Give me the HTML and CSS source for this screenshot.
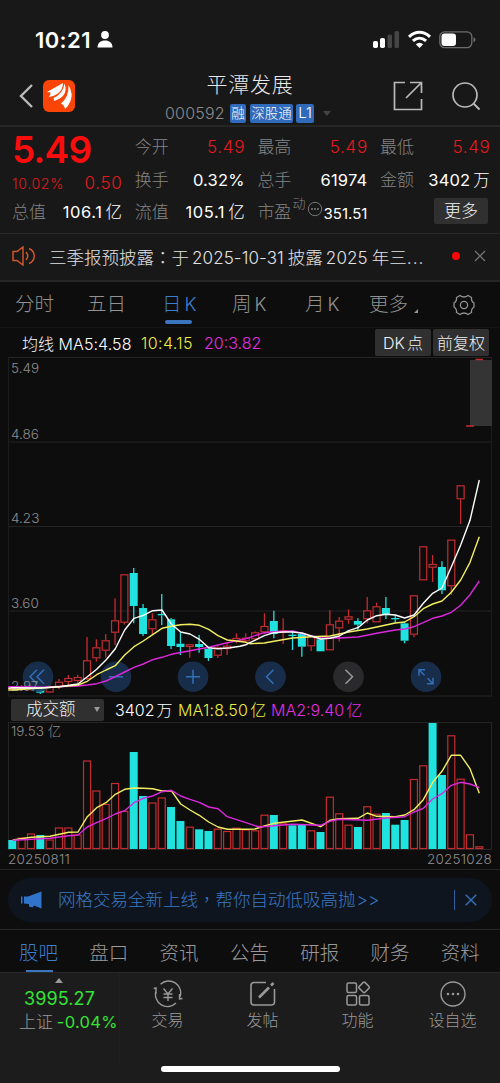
FILE: index.html
```
<!DOCTYPE html>
<html lang="zh-CN">
<head>
<meta charset="utf-8">
<title>平潭发展 000592</title>
<link rel="stylesheet" href="styles.css">
</head>
<body>
<header class="top">
  <div class="status">
    <div class="clock">10:21</div>
    <svg class="person" width="16" height="17" viewBox="0 0 16 17"><circle cx="8" cy="4" r="3.9" fill="#fff"/><path d="M0.5 16.5C0.5 11.8 3.6 9.4 8 9.4s7.500 2.400 7.500 7.100z" fill="#fff"/></svg>
    <svg class="signals" width="104" height="20" viewBox="0 0 104 20">
      <g fill="#fff"><rect x="0" y="11" width="5" height="7" rx="1.800"/><rect x="7" y="8" width="5" height="10" rx="1.800"/></g>
      <g fill="#454545"><rect x="14.500" y="4.500" width="4.500" height="13.500" rx="1.500"/><rect x="21.500" y="1" width="4.500" height="17" rx="1.500"/></g>
      <g fill="none" stroke="#fff" stroke-width="3"><path d="M36 6.800C42.500 0.800 50.500 0.800 57 6.800"/><path d="M39.900 10.900C44 7.200 49 7.200 53.100 10.900"/></g>
      <path d="M42.800 14.200q3.700-3 7.400 0l-3.700 3.700z" fill="#fff"/>
      <rect x="66.800" y="1.800" width="32" height="15.800" rx="4.800" fill="none" stroke="#6c6c6c" stroke-width="1.300"/>
      <rect x="68.500" y="3.500" width="14.500" height="12.400" rx="3" fill="#fff"/>
      <path d="M100.500 7v5.500q2-1 2-2.750t-2-2.750z" fill="#6c6c6c"/>
    </svg>
  </div>
  <div class="titlebar">
    <svg class="back" width="16" height="26" viewBox="0 0 16 26"><path d="M14 2L3 13L14 24" fill="none" stroke="#b9b9b9" stroke-width="2.400"/></svg>
    <svg class="logo" width="32" height="32" viewBox="0 0 32 32"><rect width="32" height="32" rx="6" fill="#fb4508"/><g fill="#fff"><path d="M4 12Q12 7.500 20 3Q20 9.500 15 13.500Q11 16.500 5.500 17Q8 14.500 7.500 12.500Q6 12 4 12z"/><path d="M21.500 3.500Q24.500 11 20 16Q16 20 11 21Q11 18.500 10.500 18Q20 14 21.500 3.500z"/><path d="M25.500 5Q30.500 14 27.500 21Q25.500 26 22 29Q21.500 25 18 23.500Q26 17 25.500 5z"/></g></svg>
    <div class="name">
      <h1>平潭发展</h1>
      <div class="code"><span class="num">000592</span><b class="tag t1">融</b><b class="tag t2">深股通</b><b class="tag t3">L1</b><i class="caret"></i></div>
    </div>
    <svg class="share" width="30" height="30" viewBox="0 0 30 30"><path d="M12 1.500H1.500v27h27V18M17 1.500h11.500V12M28 2L13 17" fill="none" stroke="#b9b9b9" stroke-width="1.700"/></svg>
    <svg class="search" width="30" height="30" viewBox="0 0 30 30"><circle cx="14" cy="14" r="12" fill="none" stroke="#b9b9b9" stroke-width="1.700"/><path d="M22.500 22.500l6 6" stroke="#b9b9b9" stroke-width="2"/></svg>
  </div>
</header>

<section class="quote">
  <div class="col">
    <div class="price">5.49</div>
    <div class="row chg"><span class="pct">10.02%</span><span class="up">0.50</span></div>
    <div class="row last"><span>总值</span><em>106.1<u>亿</u></em></div>
  </div>
  <div class="col">
    <div class="row"><span>今开</span><em class="up">5.49</em></div>
    <div class="row"><span>换手</span><em>0.32%</em></div>
    <div class="row last"><span>流值</span><em>105.1<u>亿</u></em></div>
  </div>
  <div class="col">
    <div class="row"><span>最高</span><em class="up">5.49</em></div>
    <div class="row"><span>总手</span><em>61974</em></div>
    <div class="row last pe"><span>市盈<sup>动</sup></span><svg width="16" height="16" viewBox="0 0 16 16"><circle cx="8" cy="8" r="6.700" fill="none" stroke="#777"/><g fill="#888"><circle cx="5" cy="8" r=".9"/><circle cx="8" cy="8" r=".9"/><circle cx="11" cy="8" r=".9"/></g></svg><em>351.51</em></div>
  </div>
  <div class="col">
    <div class="row"><span>最低</span><em class="up">5.49</em></div>
    <div class="row"><span>金额</span><em>3402<u>万</u></em></div>
    <button class="more">更多</button>
  </div>
</section>

<section class="news">
  <svg width="24" height="20" viewBox="0 0 24 20"><g fill="none" stroke="#d5582b" stroke-width="1.400"><path d="M1 5.500h4L11 1v18l-6-4.500H1zM14 6q3.500 4 0 8M17 2.500c7 3 7 12 0 15"/></g></svg>
  <p>三季报预披露<span class="tc" lang="zh-Hant">：</span>于<i>2025-10-31</i>披露<i>2025</i>年三<span class="dots">...</span></p>
  <b class="dot"></b>
  <svg class="x" width="12" height="12" viewBox="0 0 12 12"><path d="M1 1l10 10M11 1L1 11" stroke="#777" stroke-width="1.200"/></svg>
</section>

<nav class="periods">
  <a>分时</a><a>五日</a><a class="on">日<i>K</i></a><a>周<i>K</i></a><a>月<i>K</i></a><a class="pm">更多<s></s></a>
  <svg width="24" height="22" viewBox="0 0 24 22"><g fill="none" stroke="#929292" stroke-width="1.300" stroke-linejoin="round"><path d="M8 1.500Q10 3 12 3T16 1.500L19.500 3.500Q19 7 22 9V13Q19 15 19.500 18.500L16 20.500Q14 19 12 19T8 20.500L4.500 18.500Q5 15 2 13V9Q5 7 4.500 3.500Z"/><circle cx="12" cy="11" r="3.600"/></g></svg>
</nav>

<div class="legend">
  <span class="ma5">均线 <i>MA5:4.58</i></span><span class="ma10">10:4.15</span><span class="ma20">20:3.82</span>
  <button class="dk"><i>DK</i>点</button><button class="fq">前复权</button>
</div>

<div class="kchart">
  <svg id="kline" width="500" height="340" viewBox="0 357 500 340"></svg>
</div>

<div class="vlegend">
  <button>成交额<s></s></button>
  <span class="v0">3402<u>万</u></span><span class="v1">MA1:8.50<u>亿</u></span><span class="v2">MA2:9.40<u>亿</u></span>
</div>
<svg id="volume" width="500" height="128" viewBox="0 722 500 128"></svg>
<div class="dates"><span>20250811</span><span>20251028</span></div>

<section class="promo">
  <svg width="22" height="18" viewBox="0 0 22 18"><g fill="#3075cb"><rect x="0" y="5.500" width="1.500" height="7"/><path d="M3 5.500h4L20.500.5v17L13 14.500 11.500 16.500 8 15.500V13L3 12.500z"/></g></svg>
  <p>网格交易全新上线<span class="tc" lang="zh-Hant">，</span>帮你自动低吸高抛<i>&gt;&gt;</i></p>
  <b></b>
  <svg class="x" width="12" height="12" viewBox="0 0 12 12"><path d="M.7.700l10.600 10.600M11.300.700L.7 11.300" stroke="#3471bb" stroke-width="1.400"/></svg>
</section>

<nav class="tabs"><a class="on">股吧</a><a>盘口</a><a>资讯</a><a>公告</a><a>研报</a><a>财务</a><a>资料</a></nav>

<footer class="bottom">
  <div class="index"><s></s><strong>3995.27</strong><p>上证 <i>-0.04%</i></p></div>
  <div class="item"><svg width="30" height="28" viewBox="0 0 30 28"><g fill="none" stroke="#999" stroke-width="1.400"><path d="M7.500 4.200A12 12 0 0 1 27 17M23 23A12 12 0 0 1 3 11M.8 8.500L3 8v6M29.500 18.500L26.500 19V14M10.500 8.500l4.500 5.500 4.500-5.500M15 14v7M10.500 14h9M10.500 17.500h9"/></g></svg><span>交易</span></div>
  <div class="item"><svg width="30" height="28" viewBox="0 0 30 28"><g fill="none" stroke="#999" stroke-width="1.600"><path d="M18 2.500H6Q3 2.500 3 5.500V22Q3 25 6 25H23Q26.500 25 26.500 22V9"/><path d="M11 17.500L21 7.500" stroke-width="2.600"/><path d="M23 5.500l2.500-2.500" stroke-width="2.600"/></g></svg><span>发帖</span></div>
  <div class="item"><svg width="30" height="28" viewBox="0 0 30 28"><g fill="none" stroke="#999" stroke-width="1.500"><rect x="4" y="3" width="9.500" height="9.500" rx="1.500"/><rect x="4" y="15.500" width="9.500" height="9.500" rx="1.500"/><rect x="16.500" y="15.500" width="9.500" height="9.500" rx="1.500"/><rect x="17" y="3.200" width="8.200" height="8.200" rx="1.200" transform="rotate(45 21.100 7.300)"/></g></svg><span>功能</span></div>
  <div class="item"><svg width="30" height="28" viewBox="0 0 30 28"><circle cx="15" cy="14" r="12" fill="none" stroke="#999" stroke-width="1.400"/><g fill="#999"><circle cx="10" cy="14" r="1.300"/><circle cx="15" cy="14" r="1.300"/><circle cx="20" cy="14" r="1.300"/></g></svg><span>设自选</span></div>
  <div class="home"></div>
</footer>
<script src="chart.js"></script>
</body>
</html>
```
FILE: styles.css
```
* { box-sizing: border-box; }
body { margin: 0; width: 500px; height: 1083px; background: #0d0d0d; color: #fff; overflow: hidden; font-family: Inter, "Noto Sans CJK SC", sans-serif; font-weight: 300; }
i, em, u, s, b { font-style: normal; text-decoration: none; font-weight: inherit; }
h1, p { margin: 0; font-weight: inherit; }
svg { display: block; flex: none; }
span, a, p, em { white-space: nowrap; }
button { border: 0; padding: 0; color: #f2f2f2; background: #303030; border-radius: 2px; font-family: inherit; font-weight: 300; white-space: nowrap; }
.tc { font-family: "Noto Sans CJK TC", sans-serif; }

.top { height: 127px; background: #181818; border-bottom: 2px solid #262626; }
.status { height: 72px; padding: 30px 23px 0 35px; display: flex; }
.clock { width: 56px; font-size: 22px; line-height: 20px; font-weight: 600; letter-spacing: .4px; white-space: nowrap; }
.person { margin: 1px 0 0 6px; }
.signals { margin: 0 0 0 auto; }
.titlebar { height: 53px; padding-left: 18px; display: flex; }
.back { margin-top: 11px; }
.logo { margin: 8px 0 0 9px; }
.name { width: 250px; margin-left: 50px; display: flex; flex-direction: column; align-items: center; }
.name h1 { font-size: 21px; line-height: 26px; letter-spacing: .7px; color: #e8e8e8; }
.code { display: flex; align-items: center; height: 20px; margin-top: 5px; width: 170px; }
.num { font-size: 16px; letter-spacing: .2px; color: #8a8a8a; width: 65px; }
.tag { height: 19px; line-height: 18px; border-radius: 2px; background: #306abb; color: #fff; font-size: 13.500px; text-align: center; white-space: nowrap; }
.t1 { width: 16px; } .t2 { width: 43px; margin-left: 4px; } .t3 { width: 18px; margin-left: 3px; font-size: 15px; }
.caret { border: 4.500px solid transparent; border-top: 5px solid #444; border-bottom: 0; margin-left: 9px; }
.share { margin: 9px 0 0 18px; }
.search { margin: 9px 0 0 28px; }

.quote { height: 107px; padding: 4px 10px 0 12px; background: #181818; border-bottom: 1px solid #292929; display: grid; grid-template-columns: 110px 110px 110px 110px; column-gap: 12.700px; }
.row { height: 33px; line-height: 33px; display: flex; justify-content: space-between; align-items: center; font-size: 17px; color: #858585; }
.row em { color: #fff; font-size: 16.500px; font-weight: 400; letter-spacing: .2px; }
.row.last em { letter-spacing: .6px; }
.row.last u { letter-spacing: 0; }
.row u { margin-left: 3px; font-weight: 300; }
.row .up, .row em.up { color: #e8191c; font-weight: 300; font-size: 17px; letter-spacing: .7px; margin-right: -.5px; }
.price { height: 38px; font-size: 37px; line-height: 38px; font-weight: 600; color: #fb0d0d; letter-spacing: -.8px; }
.chg { height: 28px; }
.chg .pct { font-size: 14px; letter-spacing: .7px; color: #e0181b; }
.row.last { height: 30px; line-height: 30px; }
.pe { justify-content: flex-start; }
.pe sup { font-size: 13px; line-height: 10px; vertical-align: 10px; margin-left: 1px; }
.pe svg { margin: -6px 0 0 2px; }
.row.pe em { font-size: 15px; margin: 3px 0 0 auto; letter-spacing: 0; }
.more { width: 54px; height: 26px; margin: 1px 0 0 54px; font-size: 17px; line-height: 24px; }

.news { height: 48px; padding: 0 14px 2px 12px; background: #181818; border-bottom: 2px solid #262626; display: flex; align-items: center; }
.news p { margin-left: 13px; width: 404px; font-size: 17.500px; color: #e2e2e2; }
.news i { margin: 0 4px 0 3px; font-size: 17px; letter-spacing: .1px; }
.dots { letter-spacing: 1px; }
.dot { width: 8px; height: 8px; border-radius: 50%; background: #f80808; flex: none; }
.news .x { margin-left: 14px; }

.periods { height: 46px; padding-left: 15px; display: flex; align-items: flex-start; color: #929292; font-size: 19.500px; line-height: 45px; border-bottom: 1px solid #151515; }
.periods a { display: block; height: 46px; width: 72px; }
.periods i { margin-left: 3px; font-size: 18.500px; }
.periods a:nth-child(3) { width: 70px; margin-left: 3px; }
.periods a:nth-child(5) { width: 64px; margin-left: 1px; }
.periods .on, .tabs .on { color: #3b7dcf; }
.periods .on::after { content: ""; display: block; width: 27px; height: 4px; border-radius: 2px; background: #3b75bd; margin: -7px 0 0 3px; }
.periods .pm { width: 83px; }
.periods .pm s { display: inline-block; border: 2.500px solid #929292; border-top-color: transparent; border-left-color: transparent; margin-left: 6px; vertical-align: -2px; }
.periods svg { margin-top: 12px; }

.legend { height: 29px; padding: 0 11px 0 22px; display: flex; align-items: center; font-size: 16px; }
.ma5 { width: 119px; } .ma10 { width: 63px; color: #eeee45; letter-spacing: .4px; } .ma20 { color: #e32de3; }
.legend i { letter-spacing: .1px; }
.legend button { height: 27px; width: 56px; font-size: 16px; line-height: 26px; }
.legend .dk { margin-left: auto; }
.legend .fq { margin-left: 2px; }
.legend .dk i { margin-right: 2px; }

.kchart { height: 340px; }
svg text { font-family: Inter, "Noto Sans CJK SC", sans-serif; font-weight: 300; font-size: 13.500px; fill: #8e8e8e; }
.vlegend { height: 25px; padding: 0 0 1px 11px; display: flex; align-items: center; font-size: 16px; }
.vlegend button { width: 93px; height: 22px; margin-top: 1px; font-size: 16.500px; line-height: 21px; text-align: left; padding-left: 15px; display: flex; align-items: center; }
.vlegend s { border: 3.500px solid transparent; border-top: 5px solid #999; border-bottom: 0; margin-left: 18px; }
.vlegend u { margin-left: 2px; }
.v0 { margin-left: 11px; width: 63px; }
.v1 { width: 93px; color: #eeee45; letter-spacing: .2px; } .v2 { color: #e32de3; }
.dates { height: 20px; padding: 0 8px; display: flex; justify-content: space-between; font-size: 13.500px; letter-spacing: .25px; line-height: 18px; color: #8e8e8e; border-bottom: 1px solid #242424; }

.promo { height: 44px; margin: 8px 8px 7px; padding: 0 0 1px 13px; border-radius: 22px; background: #0e151e; display: flex; align-items: center; color: #3b79c5; }
.promo p { font-size: 17.500px; line-height: 26px; margin: 0 0 0 15px; width: 396px; }
.promo i { margin-left: 1px; }
.promo b { width: 1px; height: 20px; background: #2d609f; }
.promo .x { margin-left: 10px; }

.tabs { height: 43px; padding-left: 19px; border-top: 1px solid #272727; display: flex; color: #999; font-size: 19.500px; line-height: 47px; }
.tabs a { width: 70.300px; flex: none; height: 42px; }
.tabs .on::after { content: ""; display: block; width: 27px; height: 2px; background: #3b75bd; margin: -7px 0 0 7px; }

.bottom { height: 111px; background: #1c1c1c; border-top: 1px solid #292929; display: grid; grid-template-columns: 120px 95px 95px 95px 95px; grid-template-rows: 91px 20px; }
.index { padding: 5px 0 0 19px; border-right: 1px solid #202020; }
.index s { display: block; width: 0; border: 4.500px solid transparent; border-bottom: 5px solid #999; border-top: 0; margin-left: 36px; }
.index strong { display: block; margin: 4px 0 0 5px; font-size: 18px; line-height: 24px; font-weight: 400; color: #35e335; letter-spacing: .1px; }
.index p { font-size: 17px; line-height: 22px; color: #999; }
.index i { color: #35e335; font-weight: 400; font-size: 16.500px; letter-spacing: .3px; margin-left: -1px; }
.item { display: flex; flex-direction: column; align-items: center; padding-top: 7px; color: #999; font-size: 16px; line-height: 24px; }
.home { grid-column: 1 / -1; width: 179px; height: 6px; margin: 2px 0 0 161px; border-radius: 3px; background: #fff; }
```
FILE: chart.js
```
const RED = '#c32c30', CYAN = '#20e2df', PITCH = 9.34, X0 = 12.3;
const cx = i => X0 + i * PITCH;
const box = (i, a, b, c) => c === 'c'
  ? `<rect x="${cx(i) - 4}" y="${a}" width="8" height="${Math.max(b - a, 1.3)}" fill="${CYAN}"/>`
  : `<rect x="${cx(i) - 3.5}" y="${a + .5}" width="7" height="${Math.max(b - a - 1, .5)}" fill="none" stroke="${RED}" stroke-width="1.2"/>`;

// index, body top, body bottom, high, low, kind
const candles = [
  [0,688,689,687,690,'r'],[1,686.5,689,685,691,'r'],[2,686.5,689,685,691,'r'],
  [3,688.5,692.7,686,694,'c'],[4,687,692.5,685,693,'r'],[5,681.7,686.7,679,689,'r'],[6,678,682,675,686,'r'],
  [7,677,681,674.7,684,'r'],[8,660.3,679,637,680,'r'],[9,647.3,658.3,639.3,661.5,'r'],[10,640.3,650.7,634,657.5,'r'],
  [11,620.3,632.7,598.3,645,'r'],[12,574.3,622.7,574,624.5,'r'],[13,573,606,568,623.3,'c'],[14,608,634,604,636,'c'],
  [15,619.3,629.3,613.3,634,'r'],[16,614,615.3,594,625,'c'],[17,619.3,646,618,649,'c'],[18,643.7,647,632.3,655,'c'],
  [19,644.3,647,644,657.7,'r'],[20,644,647,635,652.7,'c'],[21,648.7,658,646.7,661,'c'],[22,647.3,655.7,646,658,'r'],
  [23,645.7,649,642.7,655,'r'],[24,638,641.7,633.3,643.3,'r'],[25,637.7,641.3,633.3,642.7,'r'],[26,632.3,639.3,631.5,641,'r'],
  [27,626,632.3,613.3,634,'r'],[28,621,634,610.7,638.3,'c'],[29,630.3,632.7,618.3,644,'r'],[30,634.7,636,630.7,650,'c'],
  [31,634,646.7,633,656.7,'c'],[32,636,646.3,635,651,'r'],[33,639.3,651.3,639,651.3,'c'],[34,624.3,650.3,610.3,650.3,'r'],
  [35,620.7,628.3,617,641.7,'r'],[36,616.3,619.7,609.3,623.7,'r'],[37,621,624.7,618.3,630,'c'],[38,610.3,619.3,597,623.3,'r'],
  [39,606.3,622.3,602.7,622.3,'r'],[40,608,614.7,597,619,'c'],[41,618,619.3,615,623,'c'],[42,623.3,640.7,621.7,643.3,'c'],
  [43,595.3,634.7,595.3,637.3,'r'],[44,546.3,580.3,546.3,580.3,'r'],[45,564,567.7,555,582,'r'],[46,567,590.3,561.3,594,'c'],
  [47,539.7,586.3,539.7,595,'r'],[48,485.3,499.3,485.3,524,'r']
];
const wick = (i, a, b, k) => b > a ? `<path d="M${cx(i)} ${a}V${b}" stroke="${k === 'c' ? CYAN : RED}" stroke-width="1.3"/>` : '';

// each segment: x offset, y offset, then points on a 1/3 pixel grid
const curve = (color, ...segs) => {
  const pts = segs.flatMap(([ox, oy, s]) => s.split(' ').map(p => {
    const [x, y] = p.split(',').map(Number);
    return (ox + x / 3).toFixed(1) + ',' + (oy + y / 3).toFixed(1);
  }));
  return `<polyline points="${pts.join(' ')}" fill="none" stroke="${color}" stroke-width="1.4" stroke-linejoin="round"/>`;
};
const YEL = '#f2ee60', MAG = '#dc28dc';

let k = '';
for (const y of [357.5, 442, 526.5, 611, 696]) k += `<path d="M8 ${y}H492" stroke="#242424"/>`;
k += '<path d="M8.500 357V697M491.500 357V697" stroke="#1d1d1d"/>';
k += '<rect x="470" y="360" width="22" height="66" fill="#343434"/>';
for (const [i, a, b, h, l, c] of candles) k += wick(i, h, a, c) + wick(i, b, l, c) + box(i, a, b, c);
k += `<path d="M466 426H474M475.500 359.500H483" stroke="${RED}" stroke-width="1.5"/>`;

const icons = [
  ['M-1 -7L-8 0L-1 7M6 -7L-1 0L6 7', 38], ['M-7 0H7', 116], ['M-7 0H7M0 -7V7', 193],
  ['M3 -7L-4 0L3 7', 270.5], ['M-3 -7L4 0L-3 7', 348.5],
  ['M-7 -1V-7H-1M-7 -7L-1.500 -1.500M7 1V7H1M7 7L1.500 1.500', 426]
];
icons.forEach(([d, x], n) => {
  const g = n === 4;
  k += `<g transform="translate(${x} 676.8)"><circle r="15.3" fill="${g ? '#303032' : '#1b3455'}" opacity=".85"/><path d="${d}" fill="none" stroke="${g ? '#999' : '#3270b8'}" stroke-width="1.500"/></g>`;
});
[['5.49', 372.5], ['4.86', 438.5], ['4.23', 523], ['3.60', 607.5], ['2.97', 691]].forEach(([t, y]) => k += `<text x="11" y="${y}">${t}</text>`);
k += curve(MAG, [0,550,'25,410 38,410 122,412 234,408 262,405 290,401 318,393 346,380 374,366 402,352 430,342 458,329 486,322 514,313 570,302 626,292 682,278 738,266'],
  [250,470,'0,502 43,488 72,485 128,483 184,498 212,503 268,504 324,501 380,490 436,480 464,477 492,470 520,458 548,445 576,438 604,427 632,406 660,374 688,333']);
k += curve(YEL, [0,550,'25,420 38,420 122,414 178,410 234,405 262,394 290,374 318,360 346,347 374,315 402,290 430,273 458,254 486,235 514,229 542,224 570,223 598,226 626,238 654,257 682,270 710,273 738,277'],
  [250,470,'0,521 43,519 72,514 128,504 184,500 240,498 296,486 352,477 380,471 436,459 464,456 492,440 520,416 548,402 576,393 604,367 632,330 660,277 688,200']);
k += curve('#fff', [0,550,'25,415 38,413 122,414 178,410 234,402 262,380 290,358 318,330 346,296 374,240 402,205 430,196 458,182 486,180 514,222 542,246 570,252 598,268 626,293 654,296 690,293 720,289 738,284'],
  [250,470,'0,518 43,497 72,488 100,486 128,486 156,489 184,498 212,507 240,505 268,498 296,482 324,473 352,450 380,437 408,433 436,435 464,444 492,435 520,400 548,370 576,354 604,291 632,225 660,151 688,30']);
document.getElementById('kline').innerHTML = k;

const tops = [840,837.5,833.5,835,839.5,827.5,827.5,834.5,760.5,790.5,804,783,811,752,796,802.5,797.5,807,821,826.7,829.3,831,828.7,831,827.7,829.5,
  830.3,814.7,815,823.3,825.3,824.7,830.3,832,796.7,813.3,824.7,827,806.3,813.7,813,824.7,820,779,765.3,723,775,735.3,778.7,834.3,846.3];
const down = new Set([0,3,13,14,17,18,20,21,28,30,31,33,37,40,41,42,45,46]);
let v = '<path d="M8 722.500H492M8 849.500H492M8.500 722V850M491.500 722V850" stroke="#242424"/><text x="11" y="736">19.53 亿</text>';
tops.forEach((t, i) => v += box(i, t, 849, down.has(i) ? 'c' : 'r'));
v += curve(YEL, [0,720,'38,360 94,352 150,349 206,337 234,336 262,290 290,263 318,248 346,223 374,208 402,204 430,205 458,206 486,213 514,212 542,252 570,270 598,286 626,306 654,321 682,328 738,328'],
  [250,700,'15,387 43,378 72,370 156,360 212,380 240,361 268,356 324,355 352,339 380,349 436,350 464,345 492,329 520,299 548,247 576,214 604,166 632,166 660,206 688,280']);
v += curve(MAG, [0,720,'38,361 150,355 206,347 234,345 262,321 290,308 318,296 346,282 374,272 402,248 430,235 458,228 486,215 514,211 542,228 570,238 598,247 626,261 654,266 682,290 738,308'],
  [250,700,'15,377 30,381 72,377 128,373 212,376 240,364 268,358 352,361 408,354 464,350 492,336 520,325 548,297 576,281 604,256 632,247 660,252 688,263']);
document.getElementById('volume').innerHTML = v;
```
